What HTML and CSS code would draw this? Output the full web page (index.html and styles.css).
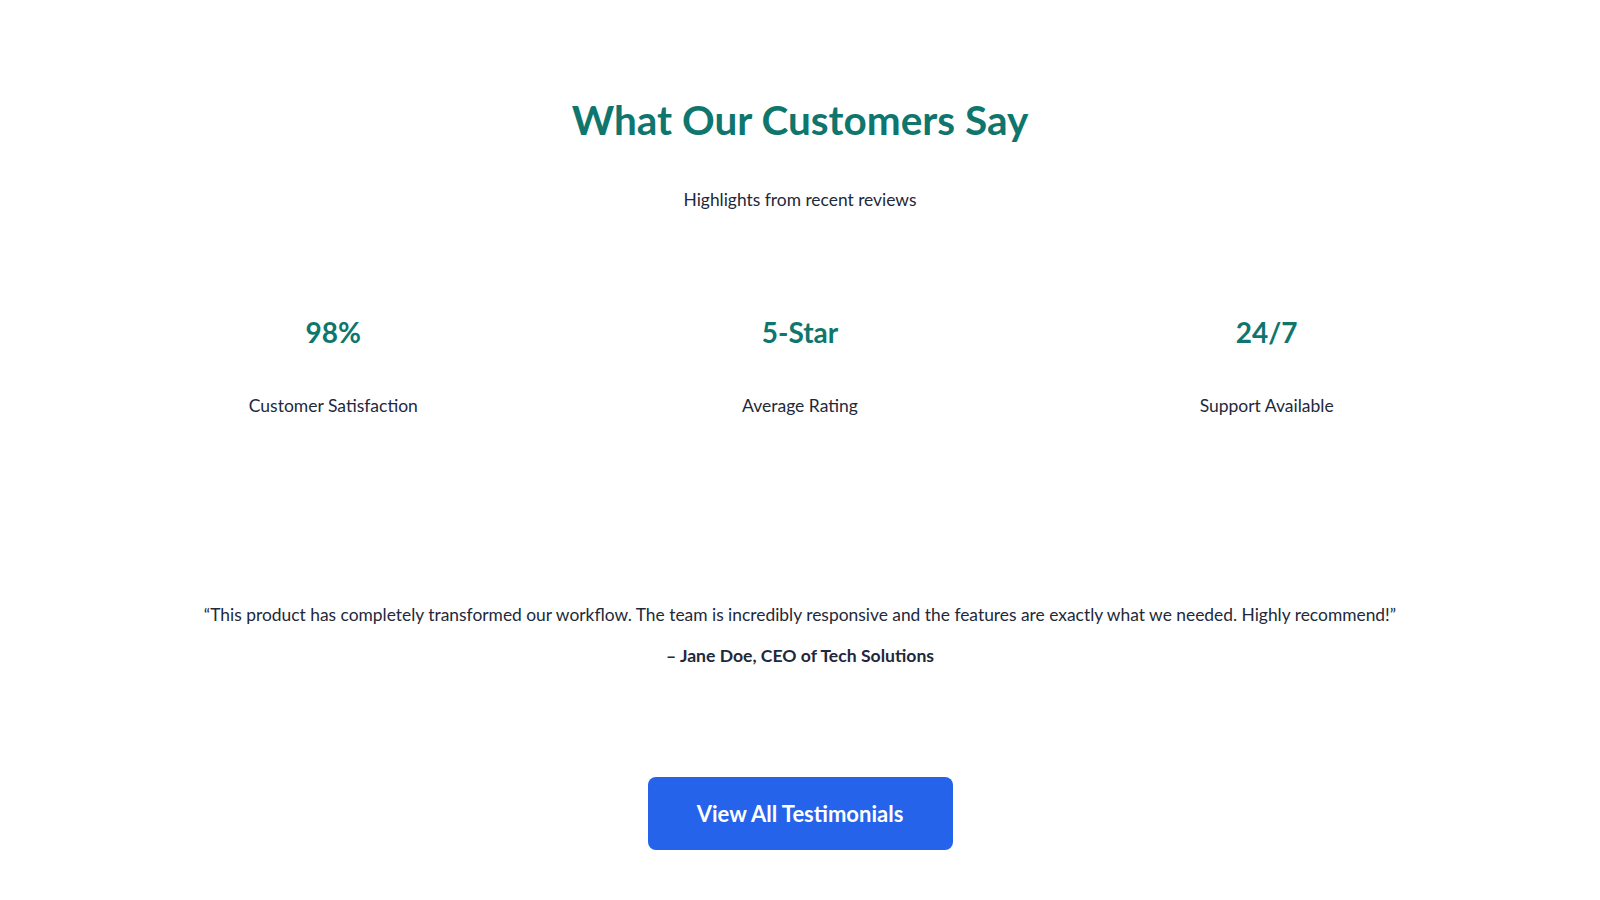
FILE: index.html
```html
<!DOCTYPE html>
<html lang="en">
<head>
<meta charset="utf-8">
<title>Testimonials</title>
<link rel="stylesheet" href="styles.css">
</head>
<body>
<section class="testimonials">
  <header class="intro">
    <h1 class="title">What Our Customers Say</h1>
    <p class="subtitle">Highlights from recent reviews</p>
  </header>
  <div class="stats">
    <div class="stat">
      <div class="stat-value">98%</div>
      <div class="stat-label">Customer Satisfaction</div>
    </div>
    <div class="stat">
      <div class="stat-value">5-Star</div>
      <div class="stat-label">Average Rating</div>
    </div>
    <div class="stat">
      <div class="stat-value">24/7</div>
      <div class="stat-label">Support Available</div>
    </div>
  </div>
  <blockquote class="quote">
    <p class="quote-text">“This product has completely transformed our workflow. The team is incredibly responsive and the features are exactly what we needed. Highly recommend!”</p>
    <p class="quote-author">– Jane Doe, CEO of Tech Solutions</p>
  </blockquote>
  <div class="cta">
    <a class="btn" href="#">View All Testimonials</a>
  </div>
</section>
</body>
</html>
```
FILE: styles.css
```css
html, body {
  margin: 0;
  padding: 0;
  background: #ffffff;
}
body {
  font-family: "Lato", "Noto Sans", sans-serif;
  color: #1e293b;
}
.testimonials {
  box-sizing: border-box;
  padding: 96px 100px 0;
}
.intro {
  text-align: center;
}
.title {
  margin: 0;
  font-size: 40.5px;
  line-height: 48px;
  font-weight: 700;
  color: #0f766e;
}
.subtitle {
  margin: 44px 0 0;
  font-size: 17.4px;
  line-height: 24px;
}
.stats {
  display: grid;
  grid-template-columns: repeat(3, 1fr);
  margin-top: 104px;
  text-align: center;
}
.stat-value {
  font-size: 28px;
  line-height: 32px;
  font-weight: 700;
  color: #0f766e;
}
.stat-label {
  margin-top: 46px;
  font-size: 17.5px;
  line-height: 24px;
}
.quote {
  margin: 185px 0 0;
  text-align: center;
}
.quote-text {
  margin: 0;
  font-size: 17.4px;
  line-height: 24px;
}
.quote-author {
  margin: 17px 0 0;
  font-size: 17.6px;
  line-height: 24px;
  font-weight: 700;
}
.cta {
  display: flex;
  justify-content: center;
  margin-top: 109px;
}
.btn {
  display: flex;
  align-items: center;
  justify-content: center;
  width: 305px;
  height: 73px;
  border-radius: 8px;
  background: #2563eb;
  color: #ffffff;
  font-size: 22px;
  font-weight: 700;
  text-decoration: none;
}
```
